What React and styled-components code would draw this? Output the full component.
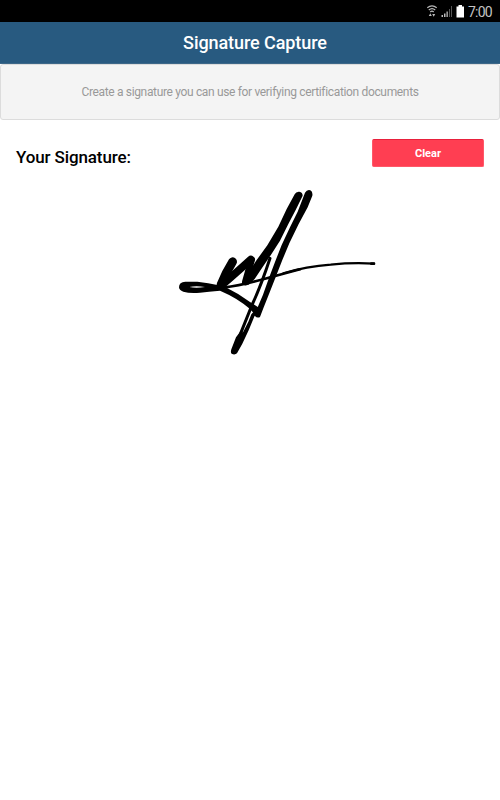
import React from "react";
import styled, { createGlobalStyle } from "styled-components";

const GlobalStyle = createGlobalStyle`
  body {
    margin: 0;
    background-color: #fff;
    font-family: Roboto, "Liberation Sans", sans-serif;
  }
`;

const Screen = styled.div`
  display: flex;
  flex-direction: column;
  width: 500px;
  height: 800px;
  overflow: hidden;
`;
const StatusBar = styled.div`
  display: flex;
  align-items: center;
  justify-content: flex-end;
  height: 22px;
  padding-right: 8px;
  box-sizing: border-box;
  background-color: #000;
`;
const StatusIcons = styled.svg`
  width: 40px;
  height: 22px;
  margin-right: 3px;
`;
const Clock = styled.span`
  color: #c4c4c4;
  font-size: 14px;
  line-height: 22px;
  width: 24px;
  padding-top: 2px;
  white-space: nowrap;
  letter-spacing: -0.8px;
`;
const Header = styled.header`
  height: 42px;
  box-sizing: border-box;
  border-bottom: 1px solid #3d6788;
  background-color: #285a80;
  color: #fff;
  font-size: 18px;
  font-weight: 500;
  line-height: 42px;
  text-align: center;
  padding-left: 10px;
  letter-spacing: -0.08px;
`;
const Notice = styled.div`
  height: 56px;
  box-sizing: border-box;
  border: 1px solid #dcdcdc;
  border-radius: 3px;
  background-color: #f4f4f4;
  color: #999;
  font-size: 12px;
  line-height: 54px;
  text-align: center;
  letter-spacing: -0.34px;
`;
const TitleRow = styled.div`
  display: flex;
  justify-content: space-between;
  padding: 19px 16px 0;
`;
const Title = styled.h1`
  margin: 0;
  padding-top: 7px;
  height: 23px;
  font-size: 17px;
  font-weight: 500;
  line-height: 22px;
  color: #000;
  letter-spacing: -0.12px;
`;
const ClearButton = styled.button`
  width: 112px;
  height: 28px;
  padding: 0;
  border: 1px solid #ff5868;
  border-top-color: #e8203c;
  border-radius: 2px;
  background-color: #ff3e52;
  color: #fff;
  font-family: inherit;
  font-size: 11px;
  font-weight: 700;
  line-height: 27px;
`;
const Pad = styled.svg`
  width: 500px;
  height: 200px;
`;

function Status() {
  return (
    <StatusBar>
      <StatusIcons viewBox="425 0 40 22">
        <g fill="none" stroke="#bbb" strokeWidth="1.2">
          <path d="M427.300 7.800Q432 4 436.700 7.800" />
          <path d="M428.800 10Q432 7.200 435.200 10" />
          <path d="M430.300 12Q432 10.400 433.700 12" />
        </g>
        <path d="M428.800 16l1.500-2.800 1.500 2.800zM432.200 14h3l-1.500 2.800z" fill="#bbb" />
        <path d="M441.500 17v-2h1.500v2zM444 17v-3.500h1.500v3.500z" fill="#bbb" />
        <path d="M446.500 17v-5.500h1.300v5.500z" fill="#bbb" />
        <path d="M449 17v-8h1v8zM451 17V6h1v11z" fill="#555" />
        <path d="M456.500 6.500h2V5h3.500v1.500h2V17.500h-7.500z" fill="#fff" />
      </StatusIcons>
      <Clock>7:00</Clock>
    </StatusBar>
  );
}

function Signature() {
  return (
    <Pad viewBox="-510 -33 1500 600">
      {/* opening loop */}
      <path
        fillRule="evenodd"
        d="M27 322Q27 306 46 305L82 305Q115 308 146 316L160 322L150 332Q115 335 90 338Q60 341 40 335Q27 330 27 322ZM58 321Q78 325 105 321Q78 317 58 321Z"
      />
      <g fill="none" stroke="#000" strokeLinecap="round" strokeLinejoin="round">
        {/* two humps */}
        <path d="M153 314Q166 280 188 245" strokeWidth="26" />
        <path d="M157 314Q190 286 242 239" strokeWidth="23" />
        <path d="M245 239L226 306" strokeWidth="20" />
        {/* crossing tail */}
        <path d="M160 323C230 314 270 300 318 287Q350 279 390 268" strokeWidth="8" />
        <path d="M340 280Q410 259 482 254Q550 247 612 251" strokeWidth="6.500" />
        <path d="M604 251L612 251" strokeWidth="8" />
        {/* thin return of the left blade */}
        <path d="M300 235Q274 315 246 375L208 470" strokeWidth="9" />
      </g>
      {/* left blade */}
      <path d="M374 43Q378 34 388 35Q398 37 398 47L377 90L355 132L330 182L303 224L280 258L254 297L236 314Q224 316 221 300L260 240L292 196L325 140L350 87Z" />
      {/* right blade */}
      <path d="M405 38Q411 28 421 31Q429 35 427 47L413 82L386 132L358 190L337 240L318 289L297 342L280 385L270 411Q262 416 254 407L236 451L217 491L201 520Q194 526 185 521Q181 518 184 508L198 472L210 456L219 457L235 425L244 403L263 382L279 344L296 296L315 246L335 195L360 142L383 95Z" />
      {/* closing stroke */}
      <path d="M146 315L167 322Q208 342 240 366L268 384L262 412L240 387Q204 355 150 332Z" />
    </Pad>
  );
}

function App() {
  return (
    <>
      <GlobalStyle />
      <Screen>
        <Status />
        <Header>Signature Capture</Header>
        <Notice>
          Create a signature you can use for verifying certification documents
        </Notice>
        <TitleRow>
          <Title>Your Signature:</Title>
          <ClearButton>Clear</ClearButton>
        </TitleRow>
        <Signature />
      </Screen>
    </>
  );
}

export default App;
